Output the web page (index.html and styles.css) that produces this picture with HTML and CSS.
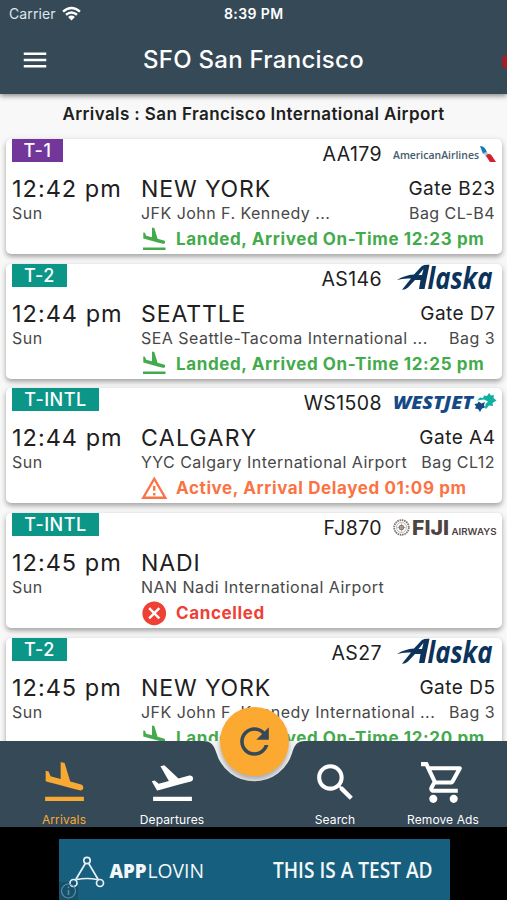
FILE: index.html
```html
<!DOCTYPE html>
<html lang="en">
<head>
<meta charset="utf-8">
<title>SFO San Francisco</title>
<link rel="stylesheet" href="styles.css">
</head>
<body>
<svg class="defs" width="0" height="0">
  <symbol id="land" viewBox="0 0 24 24"><path d="M2.5 19h19v2h-19zm7.18-5.73l4.35 1.16 5.31 1.42c.8.21 1.62-.26 1.84-1.06.21-.8-.26-1.62-1.06-1.84l-5.31-1.42-2.76-9.02L10.12 2v8.28L5.15 8.95l-.93-2.32-1.45-.39v5.17l1.6.43 5.31 1.43z"/></symbol>
  <symbol id="alaska" viewBox="0 0 104 34">
    <text x="34.500" y="25" class="alaska-text" textLength="65" lengthAdjust="spacingAndGlyphs">laska</text>
    <path fill-rule="evenodd" d="M4 16C9 12.500 15 11 21 10.500L28 3C30 1 32 .8 36.500 .8L31.500 25H26L27.500 16H22L15 23.500Q12 26 9 25.800L18 14.500Q10 14 4 16zM30.500 5L25.500 11H29z"/>
  </symbol>
</svg>
<header class="header">
  <div class="status">
    <span class="carrier">Carrier</span>
    <svg class="wifi" viewBox="0 0 18 14"><path d="M1 5.200Q9-1.800 17 5.200M3.800 8.200Q9 3.800 14.200 8.200" fill="none" stroke="#fff" stroke-width="2.300"/><path d="M5.800 10.200Q9 7.600 12.200 10.200L9 13.600z" fill="#fff"/></svg>
    <span class="clock">8:39 PM</span>
  </div>
  <div class="appbar">
    <svg class="menu" viewBox="0 0 24 24"><path d="M3 18h18v-2H3v2zm0-5h18v-2H3v2zm0-7v2h18V6H3z"/></svg>
    <h1>SFO San Francisco</h1>
    <i class="ribbon"></i>
  </div>
</header>
<main class="list">
  <h2>Arrivals : San Francisco International Airport</h2>

  <article class="card">
    <div class="top"><b class="tag t1">T-1</b><span class="flight">AA179</span>
      <svg class="logo" viewBox="0 0 104 34"><text x="0" y="19.500" class="aa-text" textLength="86" lengthAdjust="spacingAndGlyphs">AmericanAirlines</text><path fill="#1579bd" d="M87 7c4 0 6 3 7 7l-4 1z"/><path fill="#b9c7d0" d="M90 14l4-1 3 4-4 1z"/><path fill="#d6202f" d="M93 17c2-3 5-2 6 0l4 6h-6z"/></svg></div>
    <div class="info">
      <div class="when"><span class="time">12:42 pm</span><span class="sub">Sun</span></div>
      <div class="what">
        <div class="row"><span class="city">NEW YORK</span><span class="gate">Gate B23</span></div>
        <div class="row sub"><span>JFK John F. Kennedy ...</span><span>Bag CL-B4</span></div>
        <div class="state ok"><svg><use href="#land"/></svg><span>Landed, Arrived On-Time 12:23 pm</span></div>
      </div>
    </div>
  </article>

  <article class="card">
    <div class="top"><b class="tag t2">T-2</b><span class="flight">AS146</span><svg class="logo alaska"><use href="#alaska"/></svg></div>
    <div class="info">
      <div class="when"><span class="time">12:44 pm</span><span class="sub">Sun</span></div>
      <div class="what">
        <div class="row"><span class="city">SEATTLE</span><span class="gate">Gate D7</span></div>
        <div class="row sub"><span>SEA Seattle-Tacoma International ...</span><span>Bag 3</span></div>
        <div class="state ok"><svg><use href="#land"/></svg><span>Landed, Arrived On-Time 12:25 pm</span></div>
      </div>
    </div>
  </article>

  <article class="card">
    <div class="top"><b class="tag tintl">T-INTL</b><span class="flight">WS1508</span>
      <svg class="logo" viewBox="0 0 104 34"><text x="0" y="20.500" class="wj-text" textLength="80" lengthAdjust="spacingAndGlyphs">WESTJET</text><path fill="#12b0a0" d="M84 12.500l3-3 3 .5 1-2.500 3 .5L96 5l2 2.500 3-.5-.5 3 3 2.500-4 2.500.5 3-4-.5-2.500 3h-1.500l.5-4.500 2.500-2.500-4-2z"/><path fill="#154a86" d="M81.500 16l3-.5 1-2 3 2 3.500-1.500-1 3 1 2.500-3 1-2 3.500-2-3-3-.5 1-2z"/></svg></div>
    <div class="info">
      <div class="when"><span class="time">12:44 pm</span><span class="sub">Sun</span></div>
      <div class="what">
        <div class="row"><span class="city calgary">CALGARY</span><span class="gate">Gate A4</span></div>
        <div class="row sub"><span>YYC Calgary International Airport</span><span>Bag CL12</span></div>
        <div class="state late"><svg viewBox="0 0 24 24"><path d="M12 5.990L19.530 19H4.470L12 5.990M12 2L1 21h22L12 2zm1 14h-2v2h2v-2zm0-6h-2v4h2v-4z"/></svg><span>Active, Arrival Delayed 01:09 pm</span></div>
      </div>
    </div>
  </article>

  <article class="card">
    <div class="top"><b class="tag tintl">T-INTL</b><span class="flight">FJ870</span>
      <svg class="logo" viewBox="0 0 104 34"><g fill="none" stroke="#81766f"><circle cx="8.500" cy="14.500" r="7.300" stroke-width="1.800" stroke-dasharray="1.600 .7"/><circle cx="8.500" cy="14.500" r="5" stroke-width=".5"/><circle cx="8.500" cy="14.500" r="2" stroke-width="1.400"/><path d="M8.500 10.500v8M4.500 14.500h8" stroke-width=".6"/></g><text x="19" y="21.500" class="fj-text" textLength="37" lengthAdjust="spacingAndGlyphs">FIJI</text><text x="58.500" y="21.500" class="fj-small" textLength="45" lengthAdjust="spacingAndGlyphs">AIRWAYS</text></svg></div>
    <div class="info">
      <div class="when"><span class="time">12:45 pm</span><span class="sub">Sun</span></div>
      <div class="what">
        <div class="row"><span class="city">NADI</span></div>
        <div class="row sub"><span>NAN Nadi International Airport</span></div>
        <div class="state off"><svg viewBox="0 0 24 24"><path d="M12 2C6.470 2 2 6.470 2 12s4.470 10 10 10 10-4.470 10-10S17.530 2 12 2zm5 13.590L15.590 17 12 13.410 8.410 17 7 15.590 10.590 12 7 8.410 8.410 7 12 10.590 15.590 7 17 8.410 13.410 12 17 15.590z"/></svg><span>Cancelled</span></div>
      </div>
    </div>
  </article>

  <article class="card">
    <div class="top"><b class="tag t2">T-2</b><span class="flight">AS27</span><svg class="logo alaska"><use href="#alaska"/></svg></div>
    <div class="info">
      <div class="when"><span class="time">12:45 pm</span><span class="sub">Sun</span></div>
      <div class="what">
        <div class="row"><span class="city">NEW YORK</span><span class="gate">Gate D5</span></div>
        <div class="row sub"><span>JFK John F. Kennedy International ...</span><span>Bag 3</span></div>
        <div class="state ok"><svg><use href="#land"/></svg><span>Landed, Arrived On-Time 12:20 pm</span></div>
      </div>
    </div>
  </article>
</main>
<nav class="nav">
  <svg class="notch" viewBox="0 0 507 86"><path d="M0 0H203C211 0 214 4 216.400 12A39.500 39.500 0 0 0 292.100 12C294.500 4 297 0 305 0H507V86H0z"/></svg>
  <a class="item active"><svg><use href="#land"/></svg>Arrivals</a>
  <a class="item"><svg viewBox="0 0 24 24"><path d="M2.500 19h19v2h-19zm19.570-9.360c-.21-.8-1.040-1.280-1.840-1.060L14.920 10l-6.900-6.430-1.930.51 4.140 7.170-4.970 1.330-1.970-1.540-1.450.39 1.820 3.160.77 1.330 1.600-.43 5.310-1.420 4.350-1.160L21 11.490c.81-.23 1.280-1.050 1.070-1.850z"/></svg>Departures</a>
  <a class="item search"><svg viewBox="0 0 24 24"><path d="M15.500 14h-.79l-.28-.27C15.410 12.590 16 11.110 16 9.500 16 5.910 13.090 3 9.500 3S3 5.910 3 9.500 5.910 16 9.500 16c1.610 0 3.090-.59 4.230-1.570l.27.28v.79l5 4.990L20.490 19l-4.990-5zm-6 0C7.010 14 5 11.990 5 9.500S7.010 5 9.500 5 14 7.010 14 9.500 11.990 14 9.500 14z"/></svg>Search</a>
  <a class="item"><svg viewBox="0 0 24 24"><path d="M15.550 13c.75 0 1.410-.41 1.750-1.030l3.580-6.490c.37-.66-.11-1.480-.87-1.480H5.210l-.94-2H1v2h2l3.600 7.590-1.350 2.440C4.520 15.370 5.480 17 7 17h12v-2H7l1.100-2h7.450zM6.160 6h12.150l-2.760 5H8.530L6.160 6zM7 18c-1.100 0-1.990.9-1.990 2S5.900 22 7 22s2-.9 2-2-.9-2-2-2zm10 0c-1.100 0-1.990.9-1.990 2s.89 2 1.990 2 2-.9 2-2-.9-2-2-2z"/></svg>Remove Ads</a>
  <button class="fab" aria-label="Refresh"><svg viewBox="0 0 24 24"><path d="M17.650 6.350C16.200 4.900 14.210 4 12 4c-4.420 0-7.990 3.580-7.990 8s3.570 8 7.990 8c3.730 0 6.840-2.550 7.730-6h-2.080c-.82 2.330-3.040 4-5.650 4-3.310 0-6-2.690-6-6s2.690-6 6-6c1.660 0 3.140.69 4.220 1.780L13 11h7V4l-2.350 2.350z"/></svg></button>
</nav>
<footer class="ad">
  <svg viewBox="0 0 391 61">
    <rect width="391" height="61" fill="#175f7e"/>
    <rect y="43" width="19" height="18" fill="#16516c"/>
    <g fill="none" stroke="#e6f0f5" stroke-width="1.700"><circle cx="28" cy="21.500" r="3.200"/><circle cx="14.500" cy="44" r="3.500"/><circle cx="41" cy="44" r="3.500"/><path d="M26.300 24.500L16.500 41M29.700 24.500L39.500 41M18 40.500Q28 38.500 38 40.500"/></g>
    <circle cx="9.500" cy="52" r="7" fill="none" stroke="#5d8ca3" stroke-width="1.200"/><path d="M9.500 51v5M9.500 47.500v1.800" stroke="#5d8ca3" stroke-width="1.600"/>
    <text x="50.500" y="38.800" class="app" textLength="37" lengthAdjust="spacingAndGlyphs">APP</text>
    <text x="88.500" y="38.800" class="lovin" textLength="56.500" lengthAdjust="spacingAndGlyphs">LOVIN</text>
    <text x="214" y="38.800" class="test" textLength="159.500" lengthAdjust="spacingAndGlyphs">THIS IS A TEST AD</text>
  </svg>
</footer>
</body>
</html>
```
FILE: styles.css
```css
* { box-sizing: border-box; }
body {
  margin: 0;
  width: 507px;
  height: 900px;
  overflow: hidden;
  display: flex;
  flex-direction: column;
  background: #f8f8f8;
  font-family: Inter, sans-serif;
  color: #202020;
  white-space: nowrap;
}
svg { display: block; flex: none; }
.defs { position: absolute; }

.header {
  height: 93.500px;
  flex: none;
  background: #364957;
  color: #fff;
  box-shadow: 0 2px 5px rgba(0, 0, 0, .45);
  position: relative;
  z-index: 2;
}
.status { display: grid; grid-template-columns: 53px 162px 1fr; align-items: center; height: 27px; padding-left: 9px; font-size: 14px; }
.carrier { color: #dfe6ec; letter-spacing: .1px; }
.wifi { width: 19px; height: 15px; }
.clock { font-weight: 600; letter-spacing: .4px; }
.appbar { display: flex; align-items: center; height: 65px; padding-left: 20px; }
.menu { width: 30px; height: 30px; fill: #fff; }
.appbar h1 { flex: 1; margin: 0 0 0 93px; font-size: 24px; font-weight: 500; letter-spacing: .27px; }
.ribbon { width: 5px; height: 14px; margin-top: 4px; background: #a32025; border-radius: 5px 0 0 5px; }

.list { height: 647.500px; flex: none; overflow: hidden; }
.list h2 { margin: 0; height: 45.500px; line-height: 40px; text-align: center; font-size: 17px; font-weight: 600; letter-spacing: .4px; }
.card {
  height: 115px;
  margin: 0 5px 9.670px 6px;
  padding: 0 7px 0 6px;
  background: #fff;
  border-radius: 5px;
  box-shadow: 0 3px 5px rgba(0, 0, 0, .28), 0 1px 6px rgba(0, 0, 0, .1);
}
.top { display: flex; height: 34px; align-items: flex-start; }
.tag { height: 23px; line-height: 24px; font-size: 18px; font-weight: 500; color: #fff; text-align: center; letter-spacing: .5px; }
.t1 { width: 51px; background: #73379b; }
.t2 { width: 55px; background: #0b9688; }
.tintl { width: 87px; background: #0b9688; }
.flight { margin-left: auto; line-height: 30px; font-size: 19.500px; letter-spacing: .4px; }
.logo { width: 104px; height: 34px; margin: 0 -2px 0 11px; }
.alaska { fill: #0b335c; }
.alaska-text { font: italic 700 30px "Open Sans", sans-serif; }
.aa-text { font: 600 11px "Open Sans", sans-serif; fill: #465b6e; }
.wj-text { font: italic 800 18px "Open Sans", sans-serif; fill: #154a86; }
.fj-text { font: 800 20px Inter, sans-serif; fill: #4e4340; }
.fj-small { font: 600 9.500px Inter, sans-serif; fill: #4e4340; }

.info { display: flex; }
.when { width: 129px; display: flex; flex-direction: column; }
.time, .city { font-size: 23px; line-height: 32px; letter-spacing: .9px; }
.time { font-size: 23.500px; letter-spacing: 1px; }
.calgary { letter-spacing: 1.350px; }
.what { flex: 1; }
.row { display: flex; justify-content: space-between; }
.gate { font-size: 19px; line-height: 32px; letter-spacing: .5px; margin-right: -.5px; }
.sub { font-size: 16px; line-height: 17.500px; letter-spacing: .46px; color: #484848; }
.state { display: flex; align-items: center; height: 33px; font-size: 17px; font-weight: 700; letter-spacing: .62px; }
.state svg { width: 28.500px; height: 28.500px; margin: 0 7.500px 0 -1px; fill: currentColor; }
.ok { color: #43ab4b; }
.late { color: #fb7344; }
.off { color: #ef4035; }

.nav { position: relative; z-index: 1; height: 85.500px; flex: none; display: flex; padding-left: 10px; background: #f1f1f1; }
.notch { position: absolute; left: 0; top: 0; width: 507px; height: 86px; fill: #364957; z-index: 1; }
.item { position: relative; z-index: 3; width: 108px; display: flex; flex-direction: column; align-items: center; padding-top: 17px; color: #fff; font-size: 12px; line-height: 26px; letter-spacing: .12px; }
.item svg { width: 49px; height: 49px; fill: currentColor; }
.search { margin-left: 55px; }
.active { color: #f8a934; }
.fab {
  position: absolute;
  z-index: 0;
  left: 220px;
  top: -34px;
  width: 68.500px;
  height: 68.500px;
  padding: 0;
  border: 0;
  border-radius: 50%;
  background: #fca932;
  box-shadow: 0 4px 5px rgba(0, 0, 0, .28);
  display: grid;
  place-items: center;
}
.fab svg { width: 43px; height: 43px; fill: #364957; }

.ad { flex: 1; background: #000; padding: 12.500px 0 0 58.500px; }
.ad svg { width: 391px; height: 61px; }
.ad text { fill: #f2f7fa; }
.app { font: 800 20px "Open Sans", sans-serif; }
.lovin { font: 400 20px "Open Sans", sans-serif; }
.test { font: 600 21.500px "Open Sans", sans-serif; }
```
